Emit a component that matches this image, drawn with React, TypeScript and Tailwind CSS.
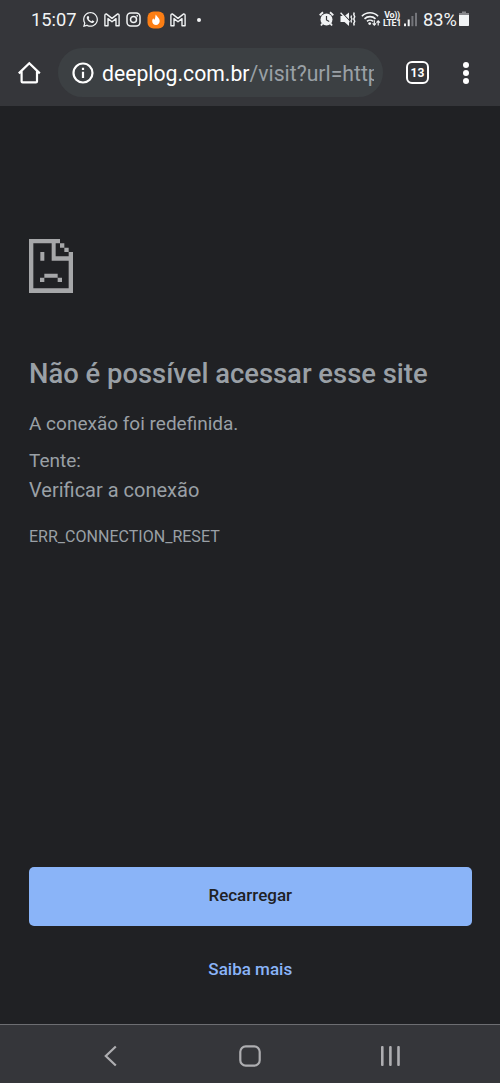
import type { ReactNode } from 'react';
import { FaWhatsapp } from 'react-icons/fa';

function GmailIcon() {
  return (
    <svg width="16" height="14" viewBox="0 0 16 14" fill="none" stroke="#f1f3f4" strokeWidth="1.4" strokeLinejoin="round">
      <path d="M.9 2.2Q1 .8 2.3.9L8 5.4 13.7.9Q15 .8 15.1 2.2V12.8H12V5.6L8 8.8 4 5.6V12.8H.9Z" />
    </svg>
  );
}

function InstagramIcon() {
  return (
    <svg width="15" height="15" viewBox="0 0 15 15" fill="none" stroke="#f1f3f4" strokeWidth="1.5">
      <rect x="1" y="1" width="13" height="13" rx="3.8" />
      <circle cx="7.5" cy="7.5" r="3" />
      <circle cx="11.2" cy="3.8" r=".9" fill="#f1f3f4" stroke="none" />
    </svg>
  );
}

function FlameIcon() {
  return (
    <svg width="18" height="18" viewBox="0 0 18 18">
      <rect x=".5" y=".5" width="17" height="17" rx="6" fill="#fb7e14" />
      <path
        d="M8.8 3.5c1 2.3 3.9 3.4 3.9 6.5 0 2.4-1.6 3.9-3.7 3.9S5.2 12.4 5.2 10.2c0-1.2.5-2.3 1.2-3 .1.9.4 1.4 1 1.5C8.6 7.3 8.1 5.3 8.8 3.5Z"
        fill="#fff"
      />
    </svg>
  );
}

function AlarmIcon() {
  return (
    <svg width="15" height="16" viewBox="0 0 15 16" fill="none" stroke="#f1f3f4">
      <circle cx="7.5" cy="8.5" r="6" fill="#f1f3f4" stroke="none" />
      <path d="M.7 4.2 4 1.3M14.3 4.2 11 1.3" strokeWidth="1.8" />
      <path d="M3.5 12.5 2 14.5M11.5 12.5 13 14.5" strokeWidth="1.8" />
      <path d="M7.5 5V9L10.2 10.5" stroke="#35363a" strokeWidth="1.2" />
    </svg>
  );
}

function VibrateIcon() {
  return (
    <svg width="16" height="16" viewBox="0 0 16 16" fill="none" stroke="#f1f3f4">
      <path d="M.5 5H4.5L9 1.5V15L4.5 11H.5Z" fill="#f1f3f4" stroke="none" />
      <path d="M2.3 2.2 9.5 9.6" stroke="#35363a" strokeWidth="1.1" />
      <path d="M.6 1.8 9.4 11.2" strokeWidth="1.3" />
      <path d="M11.6 4.5 11 6.2 12 8 11 9.800 11.6 11.500" strokeWidth="1.3" />
      <path d="M14.2 1.5 13.8 3.5 14.7 5.7 13.8 8 14.7 10.2 13.8 12.4 14.2 14.5" strokeWidth="1.5" />
    </svg>
  );
}

function WifiIcon() {
  return (
    <svg width="20" height="16" viewBox="0 0 20 16" fill="none" stroke="#f1f3f4" strokeWidth="1.6">
      <path d="M.9 5.2C5.4.6 12.6.6 17.1 5.2" />
      <path d="M3.5 7.9C6.5 4.9 11.5 4.9 14.5 7.9" />
      <path d="M6 10.4C7.7 8.8 10.3 8.8 12 10.4" />
      <circle cx="8.7" cy="12.6" r="1.4" fill="#f1f3f4" stroke="none" />
      <path d="M13.3 9.3V14M11.6 12.3 13.3 14.2 15 12.3M17.2 14.5V10M15.5 11.7 17.2 9.8 18.9 11.7" strokeWidth="1.2" />
    </svg>
  );
}

function SignalIcon() {
  return (
    <svg className="shrink-0" width="14" height="15" viewBox="0 0 14 15" fill="#f1f3f4">
      <rect x="0" y="11.5" width="2" height="2.7" />
      <rect x="3.7" y="7.5" width="2" height="6.7" />
      <rect x="7.4" y="4" width="2" height="10.2" fill="#74757a" />
      <rect x="11" y=".8" width="2" height="13.4" fill="#74757a" />
    </svg>
  );
}

function BatteryIcon() {
  return (
    <svg className="shrink-0" width="10" height="16" viewBox="0 0 10 16">
      <path d="M3 .6H7V2H10V5H0V2H3Z" fill="#85868a" />
      <path d="M0 4H10V14.3Q10 15 9.3 15H.7Q0 15 0 14.3Z" fill="#f1f3f4" />
    </svg>
  );
}

function StatusBar() {
  return (
    <div className="flex h-[39px] items-center pl-[31px] pr-[31px] text-[18.3px] leading-none text-[#f1f3f4]">
      <span className="w-[51px] whitespace-nowrap pt-px">15:07</span>
      <FaWhatsapp className="mr-[5px] size-[17px] shrink-0" />
      <GmailIcon />
      <span className="w-[6px]" />
      <InstagramIcon />
      <span className="w-[6px]" />
      <FlameIcon />
      <span className="w-[5px]" />
      <GmailIcon />
      <span className="ml-[11px] size-1 rounded-full bg-[#f1f3f4]" />
      <div className="ml-auto flex items-center">
        <AlarmIcon />
        <span className="w-[6px]" />
        <VibrateIcon />
        <span className="w-[5px]" />
        <WifiIcon />
        <div className="ml-px mr-[2px] flex w-[20px] flex-col items-center text-[9px] font-bold leading-[8px]">
          <span className="tracking-[-0.4px]">Vo))</span>
          <span className="tracking-[-0.4px]">LTE1</span>
        </div>
        <SignalIcon />
        <span className="ml-[5px] w-[36px] whitespace-nowrap pt-px">83%</span>
        <BatteryIcon />
      </div>
    </div>
  );
}

function Toolbar() {
  return (
    <div className="flex h-[67px] items-start pl-[17px] pt-[9px]">
      <button className="mt-[13px] flex size-[24px] items-center justify-center">
        <svg width="24" height="24" viewBox="0 0 24 24" fill="none" stroke="#fff" strokeWidth="2.2">
          <path d="M1.8 12.4 12.3 2.3 22.8 12.4M4.6 10.4V20.4Q4.6 21.400 5.6 21.4H19Q20 21.4 20 20.4V10.4" />
        </svg>
      </button>
      <div className="ml-[17px] flex h-[49px] w-[325px] items-center rounded-full bg-[#3c4043] pl-[14px] pr-[9px]">
        <svg className="shrink-0" width="22" height="22" viewBox="0 0 22 22" fill="none" stroke="#fff" strokeWidth="2.2">
          <circle cx="11" cy="11" r="9.5" />
          <path d="M11 9.8V16M11 5.8V8" />
        </svg>
        <div className="ml-[8px] w-[272px] overflow-hidden whitespace-nowrap pt-[2px] text-[21.2px] leading-[30px] text-[#9aa0a6]">
          <span className="text-white">deeplog.com.br</span>/visit?url=http
        </div>
      </div>
      <button className="ml-[23px] mt-[13px] flex size-[23px] items-center justify-center rounded-[6px] border-2 border-white text-[12px] font-bold leading-none text-white">
        13
      </button>
      <button className="ml-[34px] mt-[14px] flex w-[6px] flex-col gap-[2px]">
        <span className="size-[6px] rounded-full bg-white" />
        <span className="size-[6px] rounded-full bg-white" />
        <span className="size-[6px] rounded-full bg-white" />
      </button>
    </div>
  );
}

function SadPageIcon() {
  return (
    <svg width="44" height="54" viewBox="0 0 132 162" fill="#a6a7a9">
      <path d="M0 0H93V13H80V52H119V39H132V162H0ZM13 13V148H119V65H68V13Z" fillRule="evenodd" />
      <path d="M93 13H106V26H93ZM106 26H119V39H106Z" />
      <path d="M34 39H46V65H34ZM46 104H86V116H46ZM33 116H46V129H33ZM86 116H99V129H86Z" />
    </svg>
  );
}

function NavButton({ children }: { children: ReactNode }) {
  return <button className="flex w-[140px] items-center justify-center">{children}</button>;
}

function NavigationBar() {
  return (
    <nav className="flex h-[59px] justify-center border-t border-[#6d6e72] bg-[#35363a] pt-[3px]">
      <NavButton>
        <svg width="14" height="22" viewBox="0 0 14 22" fill="none" stroke="#aeaeb1" strokeWidth="2.2">
          <path d="M12.8 1.5 2.8 11 12.8 20.5" />
        </svg>
      </NavButton>
      <NavButton>
        <svg width="22" height="22" viewBox="0 0 22 22" fill="none" stroke="#aeaeb1" strokeWidth="2.2">
          <rect x="1.3" y="1.3" width="19.4" height="19.4" rx="5.5" />
        </svg>
      </NavButton>
      <NavButton>
        <svg width="20" height="20" viewBox="0 0 20 20" fill="#aeaeb1">
          <rect x="1" width="2.6" height="20" rx="1" />
          <rect x="9.1" width="2.6" height="20" rx="1" />
          <rect x="17.2" width="2.6" height="20" rx="1" />
        </svg>
      </NavButton>
    </nav>
  );
}

export default function App() {
  return (
    <div className="flex h-[1083px] w-[500px] flex-col overflow-hidden bg-[#202124] font-['Roboto',sans-serif]">
      <header className="bg-[#35363a]">
        <StatusBar />
        <Toolbar />
      </header>

      <main className="flex flex-1 flex-col pl-[29px] pr-[28.5px] pt-[133px] text-[#9aa0a6]">
        <SadPageIcon />
        <h1 className="mt-[63px] whitespace-nowrap text-[27.4px] font-medium leading-[36px]">
          Não é possível acessar esse site
        </h1>
        <p className="mt-[17px] text-[19px] leading-[29px]">A conexão foi redefinida.</p>
        <p className="mt-[8px] text-[19px] leading-[29px]">Tente:</p>
        <p className="mt-px text-[20px] leading-[29px]">Verificar a conexão</p>
        <p className="mt-[20px] text-[16.05px] leading-[24px]">ERR_CONNECTION_RESET</p>

        <div className="mb-[39.5px] mt-auto flex flex-col">
          <button className="h-[59px] rounded-[5px] bg-[#8ab4f8] text-[17px] font-medium text-[#202124]">
            Recarregar
          </button>
          <button className="mt-[29px] h-[30px] text-[17px] font-medium text-[#8ab4f8]">Saiba mais</button>
        </div>
      </main>

      <NavigationBar />
    </div>
  );
}
